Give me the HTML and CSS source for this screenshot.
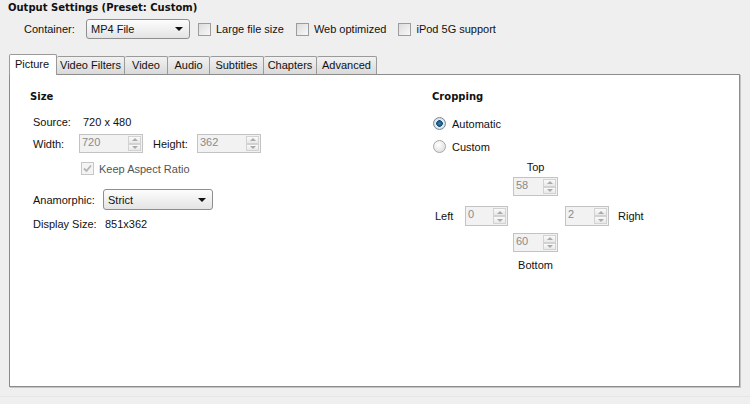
FILE: index.html
```html
<!DOCTYPE html>
<html lang="en">
<head>
    <meta charset="UTF-8">
    <title>Output Settings</title>
    <link rel="stylesheet" href="styles.css">
</head>
<body>

<h1 class="title">Output Settings (Preset: Custom)</h1>

<div class="options-row">
    <span class="opt-label">Container:</span>
    <div class="select container-select">
        <span>MP4 File</span>
        <span class="arrow"></span>
    </div>
    <label class="check"><span class="box"></span>Large file size</label>
    <label class="check"><span class="box"></span>Web optimized</label>
    <label class="check"><span class="box"></span>iPod 5G support</label>
</div>

<div class="tabs">
    <div class="tab active" style="width: 48px">Picture</div>
    <div class="tab" style="width: 68px">Video Filters</div>
    <div class="tab" style="width: 43px">Video</div>
    <div class="tab" style="width: 42px">Audio</div>
    <div class="tab" style="width: 54px">Subtitles</div>
    <div class="tab" style="width: 53px">Chapters</div>
    <div class="tab" style="width: 60px">Advanced</div>
</div>

<div class="panel">
    <!-- Size column -->
    <div class="size-col">
        <h2 class="group-title">Size</h2>

        <div class="row source-row">
            <span class="lbl lbl-source">Source:</span>
            <span>720 x 480</span>
        </div>

        <div class="row dims-row">
            <span class="lbl lbl-width">Width:</span>
            <div class="spin spin-wide"><span>720</span><div class="spin-btns"><i class="up"></i><i class="down"></i></div></div>
            <span class="lbl lbl-height">Height:</span>
            <div class="spin spin-wide"><span>362</span><div class="spin-btns"><i class="up"></i><i class="down"></i></div></div>
        </div>

        <div class="row keep-row">
            <label class="check disabled">
                <span class="box">
                    <svg width="9" height="9" viewBox="0 0 9 9"><path d="M1 4.5 L3.5 7 L8 1.5" fill="none" stroke="#b4b4b4" stroke-width="1.8"/></svg>
                </span>Keep Aspect Ratio
            </label>
        </div>

        <div class="row anam-row">
            <span class="lbl lbl-anam">Anamorphic:</span>
            <div class="select anam-select">
                <span>Strict</span>
                <span class="arrow"></span>
            </div>
        </div>

        <div class="row display-row">
            <span class="lbl lbl-display">Display Size:</span>
            <span>851x362</span>
        </div>
    </div>

    <!-- Cropping column -->
    <div class="crop-col">
        <h2 class="group-title">Cropping</h2>

        <label class="radio radio-auto"><span class="dot checked"></span>Automatic</label>
        <label class="radio radio-custom"><span class="dot"></span>Custom</label>

        <div class="crop-grid">
            <span class="edge-label top-label">Top</span>
            <div class="spin top-spin"><span>58</span><div class="spin-btns"><i class="up"></i><i class="down"></i></div></div>
            <span class="side-label left-label">Left</span>
            <div class="spin left-spin"><span>0</span><div class="spin-btns"><i class="up"></i><i class="down"></i></div></div>
            <div class="spin right-spin"><span>2</span><div class="spin-btns"><i class="up"></i><i class="down"></i></div></div>
            <span class="side-label right-label">Right</span>
            <div class="spin bottom-spin"><span>60</span><div class="spin-btns"><i class="up"></i><i class="down"></i></div></div>
            <span class="edge-label bottom-label">Bottom</span>
        </div>
    </div>
</div>

<div class="footer"></div>

</body>
</html>
```

FILE: styles.css
```css
body {
    margin: 0;
    background-color: #efefef;
    font-family: "Liberation Sans", Arial, sans-serif;
    font-size: 11px;
    color: #111;
    width: 750px;
    height: 404px;
    overflow: hidden;
}

.title {
    margin: 0;
    padding: 1px 0 0 8px;
    font-size: 10px;
    font-family: "DejaVu Sans", sans-serif;
    font-weight: bold;
    line-height: 13px;
}

/* top options */
.options-row {
    display: flex;
    align-items: center;
    height: 20px;
    margin-top: 5px;
    padding-left: 24px;
}

.opt-label {
    width: 62px;
}

.select {
    box-sizing: border-box;
    display: flex;
    align-items: center;
    justify-content: space-between;
    height: 20px;
    padding: 0 6px 0 4px;
    border: 1px solid #8e8e8e;
    border-radius: 3px;
    background: linear-gradient(#fdfdfd, #e4e4e4);
}

.select .arrow {
    width: 0;
    height: 0;
    border-left: 4px solid transparent;
    border-right: 4px solid transparent;
    border-top: 4px solid #111;
}

.container-select {
    width: 104px;
    margin-right: 8px;
}

.check {
    display: flex;
    align-items: center;
    margin-right: 12px;
}

.check .box {
    box-sizing: border-box;
    display: flex;
    align-items: center;
    justify-content: center;
    width: 13px;
    height: 13px;
    margin-right: 5px;
    border: 1px solid #9c9c9c;
    background: linear-gradient(135deg, #dcdcdc, #f8f8f8);
}

.check.disabled {
    color: #555;
}

.check.disabled .box {
    border-color: #c6c6c6;
    background: #f4f4f4;
}

/* tabs */
.tabs {
    display: flex;
    align-items: flex-end;
    margin: 15px 0 0 9px;
    height: 20px;
    position: relative;
    z-index: 1;
}

.tab {
    box-sizing: border-box;
    height: 18px;
    line-height: 16px;
    text-align: center;
    border: 1px solid #9a9a9a;
    border-bottom: none;
    border-left: none;
    border-radius: 2px 2px 0 0;
    background: linear-gradient(#f2f2f2, #d9d9d9);
    white-space: nowrap;
}

.tab.active {
    height: 21px;
    line-height: 19px;
    margin-bottom: -1px;
    border-left: 1px solid #9a9a9a;
    background: #fff;
    padding-right: 2px;
}

.panel {
    box-sizing: border-box;
    display: flex;
    width: 731px;
    height: 313px;
    margin-left: 9px;
    padding: 15px 0 0 20px;
    background: #fff;
    border: 1px solid #8c8c8c;
    box-shadow: 1px 1px 0 #c4c4c4;
}

.group-title {
    margin: 0;
    font-size: 10px;
    font-family: "DejaVu Sans", sans-serif;
    font-weight: bold;
    line-height: 13px;
}

/* size column */
.size-col {
    width: 402px;
}

.row {
    display: flex;
    align-items: center;
    padding-left: 3px;
}

.source-row { margin-top: 12px; height: 13px; }
.dims-row { margin-top: 6px; height: 19px; }
.keep-row { margin-top: 9px; height: 13px; padding-left: 51px; }
.anam-row { margin-top: 14px; height: 21px; }
.display-row { margin-top: 7px; height: 13px; }

.lbl-source { width: 50px; }
.lbl-width { width: 46px; }
.lbl-height { width: 44px; margin-left: 10px; }
.lbl-anam { width: 70px; }
.lbl-display { width: 72px; }

.anam-select {
    width: 110px;
    height: 21px;
}

/* spin boxes */
.spin {
    box-sizing: border-box;
    display: flex;
    justify-content: space-between;
    height: 19px;
    padding: 1px 1px 1px 2px;
    border: 1px solid #c3c3c3;
    background: #f2f2f2;
    color: #8a8a8a;
    line-height: 13px;
}

.spin-wide {
    width: 64px;
}

.spin-btns {
    display: flex;
    flex-direction: column;
    width: 13px;
}

.spin-btns i {
    flex: 1;
    display: flex;
    align-items: center;
    justify-content: center;
    border: 1px solid #d2d2d2;
    background: linear-gradient(#fafafa, #e8e8e8);
}

.spin-btns i::after {
    content: "";
    border-left: 3px solid transparent;
    border-right: 3px solid transparent;
}

.spin-btns .up::after { border-bottom: 3px solid #aaa; }
.spin-btns .down::after { border-top: 3px solid #aaa; }

/* cropping column */
.crop-col {
    width: 260px;
}

.radio {
    display: flex;
    align-items: center;
    height: 13px;
    padding-left: 1px;
}

.radio-auto { margin-top: 14px; }
.radio-custom { margin-top: 10px; }

.dot {
    box-sizing: border-box;
    width: 13px;
    height: 13px;
    margin-right: 6px;
    border-radius: 50%;
    border: 1px solid #a8a8a8;
    background: radial-gradient(circle at 40% 35%, #ffffff, #d8d8d8);
}

.dot.checked {
    border-color: #7c8a96;
    background: radial-gradient(circle, #3d86b8 0, #0f4a78 3px, #e9eef2 3.6px, #cfd6dc 6px);
}

.crop-grid {
    display: grid;
    grid-template-columns: 33px 48px 52px 53px auto;
    grid-template-rows: 16px 29px 27px 26px 13px;
    margin-top: 8px;
}

.edge-label {
    grid-column: 3;
    width: 45px;
    text-align: center;
    line-height: 13px;
}

.top-label { grid-row: 1; }
.bottom-label { grid-row: 5; }

.side-label {
    grid-row: 3;
    line-height: 20px;
    padding-left: 3px;
}

.left-label { grid-column: 1; }
.right-label { grid-column: 5; padding-left: 0; }

.top-spin { grid-column: 3; grid-row: 2; width: 45px; }
.left-spin { grid-column: 2; grid-row: 3; width: 43px; height: 20px; }
.right-spin { grid-column: 4; grid-row: 3; width: 44px; height: 20px; }
.bottom-spin { grid-column: 3; grid-row: 4; width: 45px; }

.footer {
    height: 8px;
    margin-top: 1px;
    border-bottom: 1px solid #e6e6e6;
}
```
